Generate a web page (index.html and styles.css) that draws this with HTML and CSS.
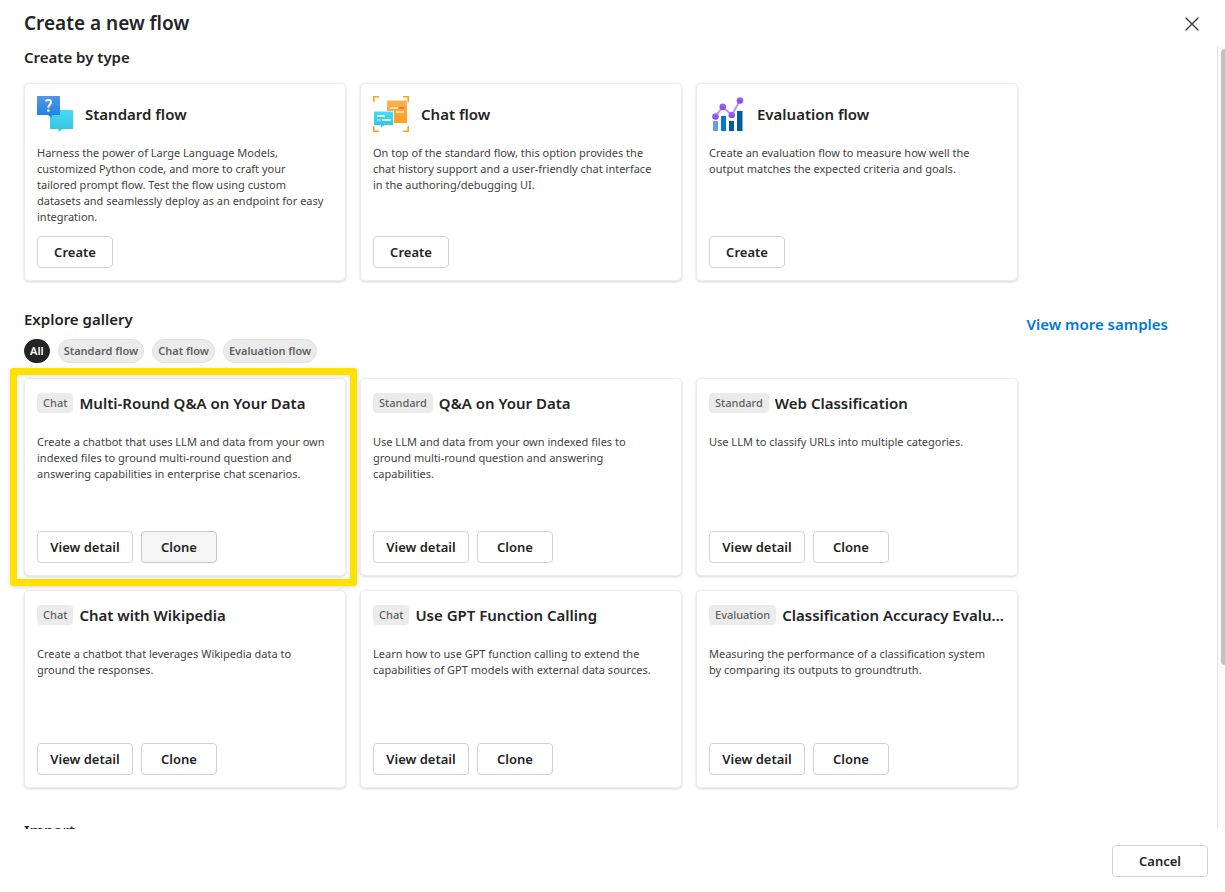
FILE: index.html
```
<!DOCTYPE html>
<html lang="en">
<head>
<meta charset="utf-8">
<meta name="viewport" content="width=device-width, initial-scale=1">
<title>Create a new flow</title>
<link rel="stylesheet" href="styles.css">
</head>
<body>
<div class="dialog" role="dialog" aria-labelledby="dialog-title">
  <header class="dialog-header">
    <h1 class="dialog-title" id="dialog-title">Create a new flow</h1>
    <button class="close" type="button" aria-label="Close">
      <svg width="14" height="14" viewBox="0 0 14 14" fill="none" stroke="#333" stroke-width="1.3" stroke-linecap="round"><path d="M1 1l12 12M13 1L1 13"/></svg>
    </button>
  </header>

  <div class="dialog-body">
    <main class="content">
      <section class="section types">
        <h2 class="section-title">Create by type</h2>
        <div class="cards">
          <article class="card">
            <div class="type-head">
              <svg class="type-icon" viewBox="0 0 36 36" aria-hidden="true">
                <defs>
                  <linearGradient id="blue" x1="0" y1="0" x2="0" y2="1"><stop offset="0" stop-color="#5296ec"/><stop offset="1" stop-color="#1c7fdc"/></linearGradient>
                  <linearGradient id="cyan" x1="0" y1="0" x2="0" y2="1"><stop offset="0" stop-color="#47dcf5"/><stop offset="1" stop-color="#32c0df"/></linearGradient>
                </defs>
                <path fill="url(#cyan)" d="M13.600 14H35.400a.6.6 0 0 1 .6.6V32.400a.6.6 0 0 1-.6.6H25.500L21.500 36V33H13.600a.6.6 0 0 1-.6-.6V14.600a.6.6 0 0 1 .6-.6z"/>
                <path fill="url(#blue)" d="M.6 0H22.400a.6.6 0 0 1 .6.6V18.400a.6.6 0 0 1-.6.6H15V22L11 19H.6a.6.6 0 0 1-.6-.6V.6A.6.6 0 0 1 .6 0z"/>
                <path fill="none" stroke="#fff" stroke-width="2" d="M8.500 5.200C9.500 3.500 14 3.200 14 6.300C14 8.800 11.300 8.700 11.300 11.800"/>
                <circle cx="11.300" cy="14.500" r="1.300" fill="#fff"/>
              </svg>
              <h3 class="type-name">Standard flow</h3>
            </div>
            <p class="desc">Harness the power of Large Language Models, customized Python code, and more to craft your tailored prompt flow. Test the flow using custom datasets and seamlessly deploy as an endpoint for easy integration.</p>
            <div class="actions"><button class="btn" type="button">Create</button></div>
          </article>
          <article class="card">
            <div class="type-head">
              <svg class="type-icon" viewBox="0 0 36 36" aria-hidden="true">
                <defs>
                  <linearGradient id="orange" x1="0" y1="0" x2="0" y2="1"><stop offset="0" stop-color="#ffb04f"/><stop offset="1" stop-color="#fa9f1d"/></linearGradient>
                </defs>
                <path fill="none" stroke="#faa21d" stroke-width="1.600" d="M.8 6V.8H6M30 .8H35.200V6M35.200 30V35.200H30M6 35.200H.8V30"/>
                <path fill="url(#orange)" d="M14.600 4.500H33.400a.6.6 0 0 1 .6.6V26.400a.6.6 0 0 1-.6.6H21V15H14V5.100a.6.6 0 0 1 .6-.6z"/>
                <path fill="#ffe0b5" d="M17 11H25V13H17zM23 15H31V17H23z"/>
                <path fill="#ef7b22" d="M26 11H31V13H26z"/>
                <path fill="url(#cyan)" d="M1.600 15.500H19.400a.6.6 0 0 1 .6.6V28.400a.6.6 0 0 1-.6.6H11.500L8 31.500V29H1.600a.6.6 0 0 1-.6-.6V16.100a.6.6 0 0 1 .6-.6z"/>
                <path fill="#fff" opacity=".8" d="M4 19H12V21H4zM9 23H18V25H9z"/>
                <path fill="#fff" opacity=".4" d="M4 23H7.500V25H4z"/>
              </svg>
              <h3 class="type-name">Chat flow</h3>
            </div>
            <p class="desc">On top of the standard flow, this option provides the chat history support and a user-friendly chat interface in the authoring/debugging UI.</p>
            <div class="actions"><button class="btn" type="button">Create</button></div>
          </article>
          <article class="card">
            <div class="type-head">
              <svg class="type-icon" viewBox="0 0 36 36" aria-hidden="true">
                <defs>
                  <linearGradient id="violet" x1="0" y1="0" x2="0" y2="1"><stop offset="0" stop-color="#a866ee"/><stop offset="1" stop-color="#8348dc"/></linearGradient>
                </defs>
                <path fill="#5ea0ef" d="M4 25H9V35H4z"/>
                <path fill="#0078d4" d="M12 20H17V35H12z"/>
                <path fill="#005ba1" d="M20 25H25V35H20zM28 15H33.500V35H28z"/>
                <path fill="none" stroke="#b796f9" stroke-width="2" d="M6.500 20.500L13.700 11L22.800 19L31 4.500"/>
                <g fill="url(#violet)"><circle cx="6.500" cy="20.500" r="3.300"/><circle cx="13.700" cy="10.800" r="3.300"/><circle cx="22.800" cy="19" r="3.300"/><circle cx="31" cy="4.500" r="3.300"/></g>
              </svg>
              <h3 class="type-name">Evaluation flow</h3>
            </div>
            <p class="desc">Create an evaluation flow to measure how well the output matches the expected criteria and goals.</p>
            <div class="actions"><button class="btn" type="button">Create</button></div>
          </article>
        </div>
      </section>

      <section class="section gallery">
        <div class="gallery-head">
          <h2 class="section-title">Explore gallery</h2>
          <a class="more" href="#">View more samples</a>
        </div>
        <div class="chips">
          <button class="chip chip-on" type="button">All</button>
          <button class="chip" type="button">Standard flow</button>
          <button class="chip" type="button">Chat flow</button>
          <button class="chip" type="button">Evaluation flow</button>
        </div>
        <div class="cards">
          <article class="card marked">
            <div class="sample-head"><span class="tag">Chat</span><h3 class="sample-name">Multi-Round Q&amp;A on Your Data</h3></div>
            <p class="desc">Create a chatbot that uses LLM and data from your own indexed files to ground multi-round question and answering capabilities in enterprise chat scenarios.</p>
            <div class="actions"><button class="btn btn-wide" type="button">View detail</button><button class="btn btn-hover" type="button">Clone</button></div>
          </article>
          <article class="card">
            <div class="sample-head"><span class="tag">Standard</span><h3 class="sample-name">Q&amp;A on Your Data</h3></div>
            <p class="desc">Use LLM and data from your own indexed files to ground multi-round question and answering capabilities.</p>
            <div class="actions"><button class="btn btn-wide" type="button">View detail</button><button class="btn" type="button">Clone</button></div>
          </article>
          <article class="card">
            <div class="sample-head"><span class="tag">Standard</span><h3 class="sample-name">Web Classification</h3></div>
            <p class="desc">Use LLM to classify URLs into multiple categories.</p>
            <div class="actions"><button class="btn btn-wide" type="button">View detail</button><button class="btn" type="button">Clone</button></div>
          </article>
          <article class="card">
            <div class="sample-head"><span class="tag">Chat</span><h3 class="sample-name">Chat with Wikipedia</h3></div>
            <p class="desc">Create a chatbot that leverages Wikipedia data to ground the responses.</p>
            <div class="actions"><button class="btn btn-wide" type="button">View detail</button><button class="btn" type="button">Clone</button></div>
          </article>
          <article class="card">
            <div class="sample-head"><span class="tag">Chat</span><h3 class="sample-name">Use GPT Function Calling</h3></div>
            <p class="desc">Learn how to use GPT function calling to extend the capabilities of GPT models with external data sources.</p>
            <div class="actions"><button class="btn btn-wide" type="button">View detail</button><button class="btn" type="button">Clone</button></div>
          </article>
          <article class="card">
            <div class="sample-head"><span class="tag">Evaluation</span><h3 class="sample-name">Classification Accuracy Evaluation</h3></div>
            <p class="desc">Measuring the performance of a classification system by comparing its outputs to groundtruth.</p>
            <div class="actions"><button class="btn btn-wide" type="button">View detail</button><button class="btn" type="button">Clone</button></div>
          </article>
        </div>
      </section>

      <section class="section">
        <h2 class="section-title">Import</h2>
      </section>
    </main>
    <div class="rail" aria-hidden="true"><div class="thumb"></div></div>
  </div>

  <footer class="dialog-footer">
    <button class="btn btn-wide" type="button">Cancel</button>
  </footer>
</div>
</body>
</html>
```
FILE: styles.css
```
* { box-sizing: border-box; }

body {
  margin: 0;
  background: #fff;
  color: #242424;
  font-family: "Segoe UI", "Noto Sans", "Open Sans", sans-serif;
}

h1, h2, h3, p { margin: 0; }
button { font-family: inherit; cursor: pointer; }

.dialog {
  display: flex;
  flex-direction: column;
  height: 100vh;
}

.dialog-header {
  display: flex;
  align-items: center;
  justify-content: space-between;
  height: 46px;
  padding: 0 24px;
  flex: none;
}

.dialog-title { font-size: 19px; line-height: 28px; font-weight: 600; }

.close {
  display: flex;
  align-items: center;
  justify-content: center;
  width: 18px;
  height: 24px;
  padding: 2px 0 0;
  border: 0;
  background: none;
}

.dialog-body {
  display: flex;
  flex: 1;
  min-height: 0;
}

.content {
  flex: 1;
  min-width: 0;
  overflow: hidden;
  padding: 0 48px 0 24px;
}

.types { margin-bottom: 27px; }
.gallery { margin-bottom: 31px; }
.section-title { font-size: 15px; line-height: 22px; font-weight: 600; }

.cards {
  display: flex;
  flex-wrap: wrap;
  gap: 14px;
  margin-top: 15px;
}

.card {
  position: relative;
  display: flex;
  flex-direction: column;
  width: 322px;
  min-height: 198px;
  padding: 12px;
  border: 1px solid #ededed;
  border-radius: 5px;
  background: #fff;
  box-shadow: 0 1px 3px rgba(0, 0, 0, 0.16);
}

.marked::after {
  content: "";
  position: absolute;
  inset: -11px -12px -11px -15px;
  border: 7px solid #ffe100;
  border-radius: 3px;
  box-shadow: 0 1px 4px rgba(0, 0, 0, 0.16), inset 0 1px 4px rgba(0, 0, 0, 0.12);
  pointer-events: none;
}

.type-head {
  display: flex;
  align-items: center;
  gap: 12px;
  margin-bottom: 13px;
}

.type-icon { width: 36px; height: 36px; }
.type-name { font-size: 15px; line-height: 22px; font-weight: 600; }

.sample-head {
  display: flex;
  align-items: center;
  gap: 6px;
  height: 24px;
  margin-bottom: 19px;
}

.sample-name {
  min-width: 0;
  overflow: hidden;
  font-size: 15px;
  line-height: 22px;
  font-weight: 600;
  white-space: nowrap;
  text-overflow: ellipsis;
}

.tag {
  flex: none;
  padding: 0 6px;
  border-radius: 4px;
  background: #ebebeb;
  color: #616161;
  font-size: 11px;
  line-height: 20px;
  font-weight: 500;
}

.desc {
  padding-right: 7px;
  color: #424242;
  font-size: 11px;
  line-height: 16px;
}

.actions {
  display: flex;
  gap: 8px;
  margin-top: auto;
}

.btn {
  min-width: 76px;
  height: 32px;
  padding: 0 12px;
  border: 1px solid #d1d1d1;
  border-radius: 4px;
  background: #fff;
  color: #242424;
  font-size: 13px;
  line-height: 20px;
  font-weight: 600;
  white-space: nowrap;
}

.btn-wide { width: 96px; padding: 0; }
.btn-hover { border-color: #c7c7c7; background: #f5f5f5; }

.gallery-head {
  display: flex;
  align-items: flex-start;
  justify-content: space-between;
  padding-right: 1px;
}

.more {
  margin-top: 5px;
  color: #0078d4;
  font-size: 15px;
  line-height: 22px;
  font-weight: 600;
  text-decoration: none;
}

.chips { display: flex; gap: 8px; }

.chip {
  height: 24px;
  margin-top: 4px;
  padding: 0 5px;
  border: 1px solid #e0e0e0;
  border-radius: 12px;
  background: #ebebeb;
  color: #616161;
  font-size: 11px;
  line-height: 20px;
  font-weight: 600;
}

.chip-on { border-color: #242424; background: #242424; color: #fff; }

.rail {
  flex: none;
  width: 8px;
  padding: 3px 0 0 3px;
  border-left: 1px solid #e8e8e8;
  background: #fafafa;
}

.thumb { height: 79%; border-radius: 4px 0 0 4px; background: #c1c1c1; }

.dialog-footer {
  display: flex;
  align-items: center;
  justify-content: flex-end;
  height: 63px;
  padding: 0 17px;
  flex: none;
}
```
